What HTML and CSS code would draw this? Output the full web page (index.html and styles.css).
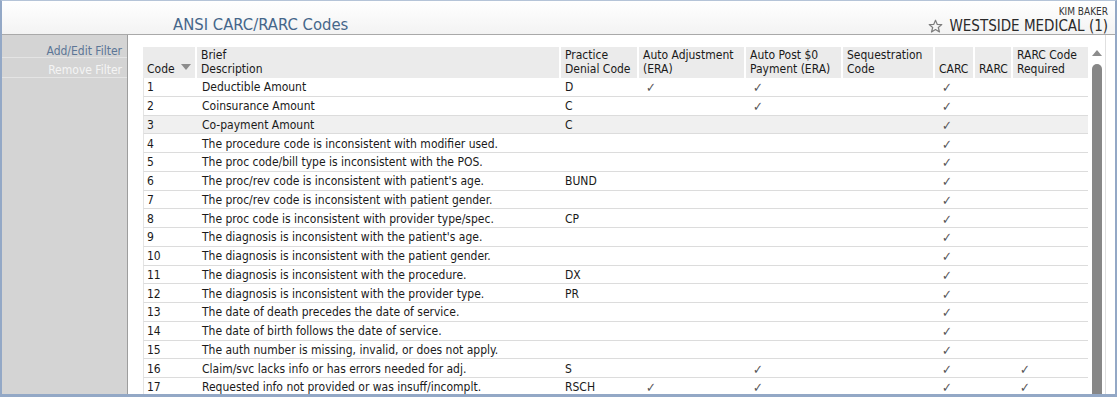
FILE: index.html
```html
<!DOCTYPE html>
<html>
<head>
<meta charset="utf-8">
<link rel="stylesheet" href="styles.css">
</head>
<body>
<div class="frame">
  <header class="topbar">
    <h1 class="title">ANSI CARC/RARC Codes</h1>
    <div class="user">
      <div class="user-name">KIM BAKER</div>
      <div class="practice">
        <svg class="star" width="15" height="15" viewBox="0 0 15 15"><path d="M7.5 1.2 L9.3 5.4 L13.8 5.6 L10.3 8.5 L11.5 13 L7.5 10.5 L3.5 13 L4.7 8.5 L1.2 5.6 L5.7 5.4 Z" fill="none" stroke="#7d7d7d" stroke-width="1.2" stroke-linejoin="round"/></svg>
        <span>WESTSIDE MEDICAL (1)</span>
      </div>
    </div>
  </header>
  <div class="content">
    <nav class="sidebar">
      <div class="side-item first">Add/Edit Filter</div>
      <div class="side-item disabled">Remove Filter</div>
    </nav>
    <main class="main">
      <div class="grid-wrap">
        <table class="grid">
          <colgroup>
            <col class="c-code"><col class="c-desc"><col class="c-prac"><col class="c-adj"><col class="c-post"><col class="c-seq"><col class="c-carc"><col class="c-rarc"><col class="c-req">
          </colgroup>
          <thead>
            <tr>
              <th>Code <span class="sort"></span></th>
              <th>Brief<br>Description</th>
              <th>Practice<br>Denial Code</th>
              <th>Auto Adjustment<br>(ERA)</th>
              <th>Auto Post $0<br>Payment (ERA)</th>
              <th>Sequestration<br>Code</th>
              <th>CARC</th>
              <th>RARC</th>
              <th class="last">RARC Code<br>Required</th>
            </tr>
          </thead>
          <tbody>
            <tr><td>1</td><td>Deductible Amount</td><td>D</td><td class="ck">✓</td><td class="ck">✓</td><td></td><td class="ck">✓</td><td></td><td></td></tr>
            <tr><td>2</td><td>Coinsurance Amount</td><td>C</td><td></td><td class="ck">✓</td><td></td><td class="ck">✓</td><td></td><td></td></tr>
            <tr class="hover"><td>3</td><td>Co-payment Amount</td><td>C</td><td></td><td></td><td></td><td class="ck">✓</td><td></td><td></td></tr>
            <tr><td>4</td><td>The procedure code is inconsistent with modifier used.</td><td></td><td></td><td></td><td></td><td class="ck">✓</td><td></td><td></td></tr>
            <tr><td>5</td><td>The proc code/bill type is inconsistent with the POS.</td><td></td><td></td><td></td><td></td><td class="ck">✓</td><td></td><td></td></tr>
            <tr><td>6</td><td>The proc/rev code is inconsistent with patient's age.</td><td>BUND</td><td></td><td></td><td></td><td class="ck">✓</td><td></td><td></td></tr>
            <tr><td>7</td><td>The proc/rev code is inconsistent with patient gender.</td><td></td><td></td><td></td><td></td><td class="ck">✓</td><td></td><td></td></tr>
            <tr><td>8</td><td>The proc code is inconsistent with provider type/spec.</td><td>CP</td><td></td><td></td><td></td><td class="ck">✓</td><td></td><td></td></tr>
            <tr><td>9</td><td>The diagnosis is inconsistent with the patient's age.</td><td></td><td></td><td></td><td></td><td class="ck">✓</td><td></td><td></td></tr>
            <tr><td>10</td><td>The diagnosis is inconsistent with the patient gender.</td><td></td><td></td><td></td><td></td><td class="ck">✓</td><td></td><td></td></tr>
            <tr><td>11</td><td>The diagnosis is inconsistent with the procedure.</td><td>DX</td><td></td><td></td><td></td><td class="ck">✓</td><td></td><td></td></tr>
            <tr><td>12</td><td>The diagnosis is inconsistent with the provider type.</td><td>PR</td><td></td><td></td><td></td><td class="ck">✓</td><td></td><td></td></tr>
            <tr><td>13</td><td>The date of death precedes the date of service.</td><td></td><td></td><td></td><td></td><td class="ck">✓</td><td></td><td></td></tr>
            <tr><td>14</td><td>The date of birth follows the date of service.</td><td></td><td></td><td></td><td></td><td class="ck">✓</td><td></td><td></td></tr>
            <tr><td>15</td><td>The auth number is missing, invalid, or does not apply.</td><td></td><td></td><td></td><td></td><td class="ck">✓</td><td></td><td></td></tr>
            <tr><td>16</td><td>Claim/svc lacks info or has errors needed for adj.</td><td>S</td><td></td><td class="ck">✓</td><td></td><td class="ck">✓</td><td></td><td class="ck">✓</td></tr>
            <tr><td>17</td><td>Requested info not provided or was insuff/incomplt.</td><td>RSCH</td><td class="ck">✓</td><td class="ck">✓</td><td></td><td class="ck">✓</td><td></td><td class="ck">✓</td></tr>
          </tbody>
        </table>
      </div>
      <div class="scrollbar">
        <div class="arrow-up"></div>
        <div class="thumb"></div>
      </div>
      <div class="gutter"></div>
    </main>
  </div>
</div>
</body>
</html>
```
FILE: styles.css
```css
* { box-sizing: border-box; }
html, body { margin: 0; padding: 0; }
body {
  width: 1117px;
  height: 397px;
  overflow: hidden;
  background: #fff;
  font-family: "DejaVu Sans Condensed", "DejaVu Sans", sans-serif;
  font-stretch: condensed;
  font-size: 12px;
  color: #1a1a1a;
}
.frame {
  width: 1117px;
  height: 397px;
  border: 2px solid #93a8c6;
  border-top: 1px solid #b5c4d8;
  border-bottom: 3px solid #93a8c6;
  display: flex;
  flex-direction: column;
  overflow: hidden;
}
.topbar {
  height: 34px;
  flex: none;
  border-bottom: 1px solid #a9a9a9;
  background: linear-gradient(#ffffff, #f3f3f3);
  display: flex;
  justify-content: space-between;
  align-items: flex-start;
}
.title {
  margin: 15px 0 0 171px;
  font-size: 16.5px;
  line-height: 18px;
  font-weight: normal;
  color: #45668a;
  letter-spacing: 0;
}
.user {
  text-align: right;
  padding: 5px 7px 0 0;
}
.user-name {
  font-size: 10px;
  color: #333;
  line-height: 11px;
}
.practice {
  font-size: 15px;
  color: #2a2a2a;
  line-height: 17px;
  margin-top: 1px;
  display: flex;
  align-items: center;
  justify-content: flex-end;
  gap: 6px;
}
.star { display: block; flex: none; margin-top: -1px; }
.content {
  flex: 1;
  display: flex;
  min-height: 0;
}
.sidebar {
  width: 126px;
  flex: none;
  background: #d4d4d4;
  border-right: 1px solid #9d9d9d;
}
.side-item {
  height: 20px;
  padding-top: 5px;
  line-height: 14px;
  text-align: right;
  padding-right: 5px;
  border-bottom: 1px solid #e4e4e4;
  color: #5c7696;
  font-size: 12px;
}
.side-item.first { height: 23px; padding-top: 10px; line-height: 12px; }
.side-item.disabled { color: #f4f4f4; }
.main {
  flex: 1;
  display: flex;
  padding: 12px 0 0 15px;
  background: #fff;
  min-width: 0;
}
.grid-wrap {
  width: 946px;
  flex: none;
  overflow: hidden;
}
.grid {
  table-layout: fixed;
  border-collapse: separate;
  border-spacing: 0;
  width: 945px;
}
.c-code { width: 54px; }
.c-desc { width: 364px; }
.c-prac { width: 78px; }
.c-adj { width: 107px; }
.c-post { width: 97px; }
.c-seq { width: 92px; }
.c-carc { width: 40px; }
.c-rarc { width: 38px; }
.c-req { width: 75px; }
.grid th {
  background: #ebebeb;
  font-weight: normal;
  text-align: left;
  vertical-align: bottom;
  height: 31px;
  padding: 1px 3px 2px 4px;
  line-height: 14px;
  border-right: 2px solid #fff;
  white-space: nowrap;
  color: #1a1a1a;
}
.grid th.last { border-right: none; }
.sort {
  display: inline-block;
  width: 0;
  height: 0;
  border-left: 5px solid transparent;
  border-right: 5px solid transparent;
  border-top: 6px solid #8c8c8c;
  margin-left: 3px;
  vertical-align: 3px;
}
.grid td {
  height: 18.75px;
  padding: 2px 3px 0 4px;
  border-bottom: 1px solid #dcdcdc;
  white-space: nowrap;
  overflow: hidden;
  line-height: 15px;
  vertical-align: middle;
}
.grid td:first-child { border-left: 1px solid #e4e4e4; padding-left: 3px; }
.grid tbody td:nth-child(2) { padding-left: 5px; }
.grid tr.hover td { background: #f0f0f0; }
.grid td.ck {
  color: #555;
  font-size: 13px;
  line-height: 13px;
  padding-left: 7px;
}
.scrollbar {
  width: 12px;
  flex: none;
  margin-left: 2px;
  display: flex;
  flex-direction: column;
  align-items: center;
}
.arrow-up {
  width: 0;
  height: 0;
  border-left: 5px solid transparent;
  border-right: 5px solid transparent;
  border-bottom: 6px solid #8c8c8c;
  margin-top: 3px;
}
.thumb {
  margin-top: 8px;
  width: 10px;
  flex: 1;
  background: #878787;
  border-radius: 5px 5px 0 0;
}
.gutter {
  width: 1px;
  margin-left: 2px;
  background: #e0e0e0;
  flex: none;
  margin-top: -12px;
}
```
